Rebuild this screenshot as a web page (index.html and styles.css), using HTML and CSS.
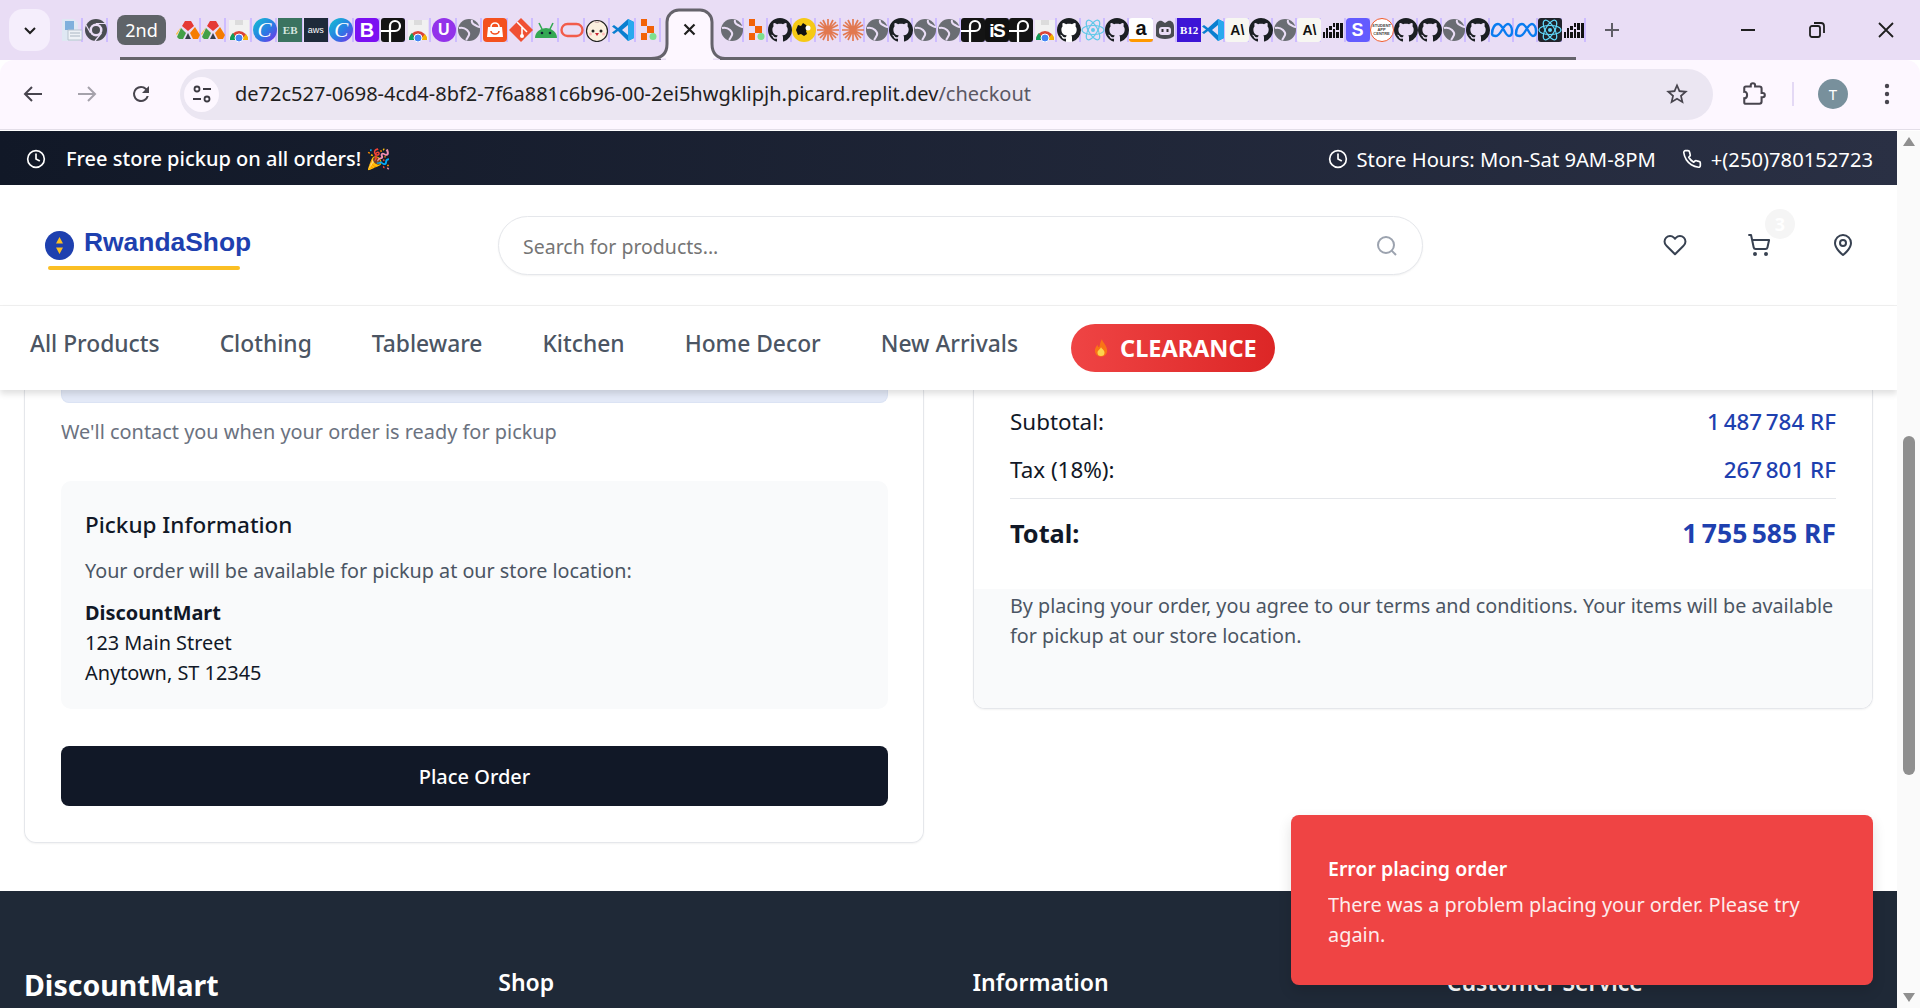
FILE: index.html
```html
<!DOCTYPE html>
<html lang="en">
<head>
  <meta charset="UTF-8">
  <title>Checkout - RwandaShop</title>
  <link rel="stylesheet" href="styles.css">
</head>
<body>

<!-- favicons used in the tab strip -->
<svg class="sprites" aria-hidden="true">
  <symbol id="doc" viewBox="0 0 24 24"><path d="M3 1h12l4 4v18H3z" fill="#dfe8f3"/><path d="M6 3h9v9H6z" fill="#7fb0dc"/><path d="M9 12h14v10H9z" fill="#eef2f6" stroke="#b9c4cf"/><path d="M11 15h10M11 18h10" stroke="#aab6c2"/></symbol>
  <symbol id="chromegrey" viewBox="0 0 24 24"><circle cx="12" cy="12" r="11" fill="#4a4d52"/><circle cx="12" cy="12" r="6.5" fill="#e9ddf5"/><circle cx="12" cy="12" r="4" fill="#4a4d52"/><path d="M12 5.500H22M6.500 15L2 7M17.500 15L11 23" stroke="#e9ddf5" stroke-width="1.200"/></symbol>
  <symbol id="tri" viewBox="0 0 24 24"><path d="M9 3h6l3 5-6 5-6-5z" fill="#e53935"/><path d="M5 10l5 5-3 6H3l-2-2z" fill="#43a047"/><path d="M5 9L1 17l-1-1z" fill="#fbc02d"/><path d="M19 9l5 8-2 4h-5l-3-6z" fill="#f57c00"/><path d="M12 15l3 6H9z" fill="#37404a"/></symbol>
  <symbol id="store" viewBox="0 0 24 24"><path d="M2 2h20v20H2z" fill="#f1f1f1"/><path d="M8 2h8v5H8z" fill="#dcdcdc"/><path d="M3 22a9 9 0 0 1 18 0z" fill="#db4437"/><path d="M3 22a9 9 0 0 1 3-7l4 7z" fill="#0f9d58"/><path d="M21 22a9 9 0 0 0-2-6l-5 6z" fill="#f4b400"/><circle cx="12" cy="20" r="4" fill="#4285f4" stroke="#fff"/></symbol>
  <symbol id="github" viewBox="0 0 16 16"><path fill="#1b1f23" d="M8 0C3.58 0 0 3.58 0 8c0 3.54 2.29 6.53 5.47 7.63.4.07.55-.17.55-.38 0-.19-.01-.82-.01-1.49-2.01.37-2.53-.49-2.69-.94-.09-.23-.48-.94-.82-1.13-.28-.15-.68-.52-.01-.53.63-.01 1.08.58 1.23.82.72 1.21 1.87.87 2.33.66.07-.52.28-.87.51-1.07-1.78-.2-3.64-.89-3.64-3.95 0-.87.31-1.59.82-2.15-.08-.2-.36-1.02.08-2.12 0 0 .67-.21 2.2.82.64-.18 1.32-.27 2-.27.68 0 1.36.09 2 .27 1.53-1.04 2.2-.82 2.2-.82.44 1.1.16 1.92.08 2.12.51.56.82 1.27.82 2.15 0 3.07-1.87 3.75-3.65 3.95.29.25.54.73.54 1.48 0 1.07-.01 1.93-.01 2.2 0 .21.15.46.55.38A8.013 8.013 0 0016 8c0-4.42-3.58-8-8-8z"/></symbol>
  <symbol id="globe" viewBox="0 0 24 24"><circle cx="12" cy="12" r="11" fill="#6a6d73"/><path d="M2 10c4-1 6 0 8 2s3 3 2 5-2 4-3 5" fill="none" stroke="#e9ddf5" stroke-width="2"/><path d="M15 2c-1 3 1 4 3 5s3 2 5 2" fill="none" stroke="#e9ddf5" stroke-width="2"/></symbol>
  <symbol id="loop" viewBox="0 0 24 24"><rect width="24" height="24" rx="3" fill="#141414"/><path d="M0 13h14a5 5 0 1 0-5-5v16" fill="none" stroke="#fff" stroke-width="2.200"/></symbol>
  <symbol id="bag" viewBox="0 0 24 24"><rect width="24" height="24" rx="4" fill="#f4511e"/><path d="M5 9h14l1 10H4z" fill="#fff"/><path d="M8 13a4 3 0 0 0 8 0" fill="none" stroke="#f4511e" stroke-width="1.600"/><path d="M8 9a4 4 0 0 1 8 0" fill="none" stroke="#fff" stroke-width="1.600"/></symbol>
  <symbol id="git" viewBox="0 0 24 24"><path d="M12 0l12 12-12 12L0 12z" fill="#f05033"/><path d="M8 4l5 5v9M13 9l5 5" fill="none" stroke="#fff" stroke-width="1.600"/><circle cx="13" cy="18" r="2" fill="#fff"/></symbol>
  <symbol id="android" viewBox="0 0 24 24"><path d="M1 20a11 10 0 0 1 22 0z" fill="#34a853"/><path d="M5 5l3 6M19 5l-3 6" stroke="#34a853" stroke-width="1.600"/><circle cx="8" cy="15" r="1.300" fill="#123"/><circle cx="16" cy="15" r="1.300" fill="#123"/></symbol>
  <symbol id="oracle" viewBox="0 0 24 24"><rect x="1.500" y="6" width="21" height="12" rx="6" fill="none" stroke="#f25c4a" stroke-width="2.400"/></symbol>
  <symbol id="bun" viewBox="0 0 24 24"><circle cx="12" cy="13" r="10.500" fill="#fbf0df" stroke="#222" stroke-width="1.200"/><path d="M9 3c1 2 5 2 6 0" fill="none" stroke="#caa"/><circle cx="8" cy="13" r="1.500" fill="#222"/><circle cx="16" cy="13" r="1.500" fill="#222"/><path d="M10 15h4l-2 3z" fill="#c23"/><circle cx="5.500" cy="16" r="1.500" fill="#fbb"/><circle cx="18.500" cy="16" r="1.500" fill="#fbb"/></symbol>
  <symbol id="vscode" viewBox="0 0 24 24"><path d="M17 1l6 3v16l-6 3L7 13l-4 3-2-1.500 4-3-4-3 2-1.500 4 3z" fill="#0a7fd0"/><path d="M17 1l6 3v16l-6 3z" fill="#29a9ee"/><path d="M17 7l-6 5 6 5z" fill="#e9ddf5"/></symbol>
  <symbol id="replit" viewBox="0 0 24 24"><path d="M5 1h6v7H5zM11 8h7v7h-7zM5 15h6v7H5z" fill="#f26207"/><circle cx="17" cy="18.500" r="3.500" fill="#7ee08f"/></symbol>
  <symbol id="pac" viewBox="0 0 24 24"><circle cx="12" cy="12" r="12" fill="#f6c915"/><path d="M4 12l2-5 3 1 2-3 3 2 2 3-2 3 1 3-3 2-3-2-3 1z" fill="#111"/><circle cx="16" cy="10" r="2.500" fill="#fff"/></symbol>
  <symbol id="star" viewBox="0 0 24 24"><path d="M12 1v22M1 12h22M4 4l16 16M20 4L4 20M7 2l10 20M17 2L7 22M2 7l20 10M22 7L2 17" stroke="#e2784f" stroke-width="1.700"/></symbol>
  <symbol id="react" viewBox="0 0 24 24"><g fill="none" stroke="#61c8e8" stroke-width="1.200"><ellipse cx="12" cy="12" rx="11" ry="4.500"/><ellipse cx="12" cy="12" rx="11" ry="4.500" transform="rotate(60 12 12)"/><ellipse cx="12" cy="12" rx="11" ry="4.500" transform="rotate(120 12 12)"/></g><circle cx="12" cy="12" r="2" fill="#61c8e8"/></symbol>
  <symbol id="reactdark" viewBox="0 0 24 24"><rect width="24" height="24" rx="3" fill="#20232a"/><g fill="none" stroke="#61dafb" stroke-width="1.200"><ellipse cx="12" cy="12" rx="11" ry="4.500"/><ellipse cx="12" cy="12" rx="11" ry="4.500" transform="rotate(60 12 12)"/><ellipse cx="12" cy="12" rx="11" ry="4.500" transform="rotate(120 12 12)"/></g><circle cx="12" cy="12" r="2" fill="#61dafb"/></symbol>
  <symbol id="copilot" viewBox="0 0 24 24"><path d="M3 9c0-5 3-7 6-6l3 2 3-2c3-1 6 1 6 6v9c-3 4-15 4-18 0z" fill="#4a4d52"/><rect x="6" y="9" width="12" height="8" rx="3" fill="#e9ddf5"/><path d="M9.500 11v3M14.500 11v3" stroke="#333" stroke-width="2"/></symbol>
  <symbol id="checker" viewBox="0 0 24 24"><path d="M2 14h2v6H2zM5 10h2v10H5zM8 8h3v4H8zM8 14h3v6H8zM12 11h2v9h-2zM15 5h3v7h-3zM15 14h3v6h-3zM19 5h3v15h-3zM12 5h2v4h-2z" fill="#111"/></symbol>
  <symbol id="meta" viewBox="0 0 24 24"><path d="M2 16c0-6 3-10 6-10 5 0 7 12 11 12 2 0 3-2 3-5 0-4-2-7-4-7-5 0-7 12-12 12-3 0-4-1-4-2z" fill="none" stroke="#0a7cf0" stroke-width="2.400"/></symbol>
</svg>

<header class="browser-tabs">
  <div class="tab-search"><svg width="16" height="16" viewBox="0 0 16 16"><path d="M3 6l5 5 5-5" fill="none" stroke="#1f1f1f" stroke-width="2"/></svg></div>

  <div class="tabs tabs-pinned">
    <div class="tab"><svg><use href="#doc"/></svg></div>
    <div class="tab"><svg><use href="#chromegrey"/></svg></div>
  </div>

  <div class="tab-group tab-group-first">
    <span class="group-chip">2nd</span>
    <div class="tabs tabs-wide">
      <div class="tab"><svg><use href="#tri"/></svg></div>
      <div class="tab"><svg><use href="#tri"/></svg></div>
      <div class="tab"><svg><use href="#store"/></svg></div>
      <div class="tab"><span class="fav fav-canva">C</span></div>
      <div class="tab"><span class="fav fav-eb">EB</span></div>
      <div class="tab"><span class="fav fav-aws">aws</span></div>
      <div class="tab"><span class="fav fav-canva">C</span></div>
      <div class="tab"><span class="fav fav-boot">B</span></div>
      <div class="tab"><svg><use href="#loop"/></svg></div>
      <div class="tab"><svg><use href="#store"/></svg></div>
      <div class="tab"><span class="fav fav-u">U</span></div>
      <div class="tab"><svg><use href="#globe"/></svg></div>
      <div class="tab"><svg><use href="#bag"/></svg></div>
      <div class="tab"><svg><use href="#git"/></svg></div>
      <div class="tab"><svg><use href="#android"/></svg></div>
      <div class="tab"><svg><use href="#oracle"/></svg></div>
      <div class="tab"><svg><use href="#bun"/></svg></div>
      <div class="tab"><svg><use href="#vscode"/></svg></div>
      <div class="tab"><svg><use href="#replit"/></svg></div>
    </div>
  </div>

  <svg class="active-tab" width="74" height="60" viewBox="0 0 74 60">
    <path d="M0 58.500C10 58.500 16 54 16 44V22A12 12 0 0 1 28 10H49A12 12 0 0 1 61 22V44C61 54 67 58.500 74 58.500" fill="#fdf7ff" stroke="#65636b" stroke-width="3"/>
    <rect x="15" y="55" width="47" height="5" fill="#fdf7ff"/>
    <path d="M33.500 24.500l10 10M43.500 24.500l-10 10" stroke="#1f1f1f" stroke-width="2.200"/>
  </svg>

  <div class="tab-group tab-group-second">
    <div class="tabs">
      <div class="tab"><svg><use href="#globe"/></svg></div>
      <div class="tab"><svg><use href="#replit"/></svg></div>
      <div class="tab"><svg><use href="#github"/></svg></div>
      <div class="tab"><svg><use href="#pac"/></svg></div>
      <div class="tab"><svg><use href="#star"/></svg></div>
      <div class="tab"><svg><use href="#star"/></svg></div>
      <div class="tab"><svg><use href="#globe"/></svg></div>
      <div class="tab"><svg><use href="#github"/></svg></div>
      <div class="tab"><svg><use href="#globe"/></svg></div>
      <div class="tab"><svg><use href="#globe"/></svg></div>
      <div class="tab"><svg><use href="#loop"/></svg></div>
      <div class="tab"><span class="fav fav-is">iS</span></div>
      <div class="tab"><svg><use href="#loop"/></svg></div>
      <div class="tab"><svg><use href="#store"/></svg></div>
      <div class="tab"><span class="fav-white"><svg><use href="#github"/></svg></span></div>
      <div class="tab"><svg><use href="#react"/></svg></div>
      <div class="tab"><svg><use href="#github"/></svg></div>
      <div class="tab"><span class="fav fav-amazon">a</span></div>
      <div class="tab"><svg><use href="#copilot"/></svg></div>
      <div class="tab"><span class="fav fav-b12">B12</span></div>
      <div class="tab"><svg><use href="#vscode"/></svg></div>
      <div class="tab"><span class="fav fav-anthropic">A\</span></div>
      <div class="tab"><svg><use href="#github"/></svg></div>
      <div class="tab"><svg><use href="#globe"/></svg></div>
      <div class="tab"><span class="fav fav-anthropic">A\</span></div>
      <div class="tab"><svg><use href="#checker"/></svg></div>
      <div class="tab"><span class="fav fav-stripe">S</span></div>
      <div class="tab"><span class="fav fav-student">STUDENT APP CENTRE</span></div>
      <div class="tab"><svg><use href="#github"/></svg></div>
      <div class="tab"><svg><use href="#github"/></svg></div>
      <div class="tab"><svg><use href="#globe"/></svg></div>
      <div class="tab"><svg><use href="#github"/></svg></div>
      <div class="tab"><svg><use href="#meta"/></svg></div>
      <div class="tab"><svg><use href="#meta"/></svg></div>
      <div class="tab"><svg><use href="#reactdark"/></svg></div>
      <div class="tab"><svg><use href="#checker"/></svg></div>
    </div>
  </div>

  <svg class="new-tab" width="18" height="18" viewBox="0 0 18 18"><path d="M9 2v14M2 9h14" stroke="#5f5d66" stroke-width="2"/></svg>

  <div class="window-controls">
    <div class="window-btn"><svg width="18" height="18" viewBox="0 0 18 18"><path d="M2 9h14" stroke="#1f1f1f" stroke-width="2"/></svg></div>
    <div class="window-btn"><svg width="18" height="18" viewBox="0 0 18 18"><rect x="2" y="5" width="10" height="11" rx="2" fill="none" stroke="#1f1f1f" stroke-width="1.800"/><path d="M6 2h7a3 3 0 0 1 3 3v7" fill="none" stroke="#1f1f1f" stroke-width="1.800"/></svg></div>
    <div class="window-btn"><svg width="18" height="18" viewBox="0 0 18 18"><path d="M2 2l14 14M16 2L2 16" stroke="#1f1f1f" stroke-width="1.800"/></svg></div>
  </div>
</header>

<div class="browser-toolbar">
  <div class="tool tool-first"><svg width="22" height="22" viewBox="0 0 22 22"><path d="M20 11H3M10 4l-7 7 7 7" fill="none" stroke="#48454e" stroke-width="2"/></svg></div>
  <div class="tool"><svg width="22" height="22" viewBox="0 0 22 22"><path d="M2 11h17M12 4l7 7-7 7" fill="none" stroke="#a5a2ab" stroke-width="2"/></svg></div>
  <div class="tool"><svg width="24" height="24" viewBox="0 0 24 24"><path fill="#48454e" d="M17.650 6.350A7.960 7.960 0 0 0 12 4a8 8 0 1 0 7.730 10h-2.080A6 6 0 1 1 12 6c1.660 0 3.140.690 4.220 1.780L13 11h7V4l-2.350 2.350z"/></svg></div>

  <div class="omnibox">
    <span class="site-info"><svg width="22" height="22" viewBox="0 0 22 22"><g fill="none" stroke="#3c3a42" stroke-width="1.800"><circle cx="6" cy="6" r="2.500"/><path d="M12 6h8M2 16h8"/><circle cx="16" cy="16" r="2.500"/></g></svg></span>
    <span class="url">de72c527-0698-4cd4-8bf2-7f6a881c6b96-00-2ei5hwgklipjh.picard.replit.dev<span class="url-path">/checkout</span></span>
    <svg class="url-star" width="26" height="26" viewBox="0 0 24 24"><path fill="#48454e" d="M22 9.240l-7.190-.620L12 2 9.190 8.630 2 9.240l5.460 4.730L5.820 21 12 17.270 18.180 21l-1.630-7.030L22 9.240zM12 15.400l-3.760 2.270 1-4.280-3.320-2.880 4.380-.380L12 6.100l1.710 4.040 4.380.380-3.320 2.880 1 4.280L12 15.400z"/></svg>
  </div>

  <div class="tool tool-ext"><svg width="26" height="26" viewBox="0 0 24 24"><path fill="none" stroke="#48454e" stroke-width="1.900" d="M20 11h-1V7a2 2 0 0 0-2-2h-4V4a2 2 0 0 0-4 0v1H4.500a1.500 1.500 0 0 0-1.500 1.500V10c3.500-.500 3.500 6 0 6v3.500A1.500 1.500 0 0 0 4.500 21H17a2 2 0 0 0 2-2v-4h1a2 2 0 0 0 0-4z"/></svg></div>
  <span class="toolbar-sep"></span>
  <span class="avatar">T</span>
  <div class="tool tool-menu"><svg width="6" height="24" viewBox="0 0 6 24"><circle cx="3" cy="4" r="2.200" fill="#48454e"/><circle cx="3" cy="12" r="2.200" fill="#48454e"/><circle cx="3" cy="20" r="2.200" fill="#48454e"/></svg></div>
</div>

<div class="viewport">
  <div class="page">
    <div class="topbar">
      <div class="topbar-item topbar-promo">
        <svg class="line-icon" width="20" height="20" viewBox="0 0 24 24"><circle cx="12" cy="12" r="10"/><path d="M12 6v6l4 2"/></svg>
        <span>Free store pickup on all orders! 🎉</span>
      </div>
      <div class="topbar-right">
        <div class="topbar-item">
          <svg class="line-icon" width="20" height="20" viewBox="0 0 24 24"><circle cx="12" cy="12" r="10"/><path d="M12 6v6l4 2"/></svg>
          <span>Store Hours: Mon-Sat 9AM-8PM</span>
        </div>
        <div class="topbar-item">
          <svg class="line-icon" width="20" height="20" viewBox="0 0 24 24"><path d="M22 16.920v3a2 2 0 0 1-2.180 2 19.790 19.790 0 0 1-8.630-3.070 19.500 19.500 0 0 1-6-6 19.790 19.790 0 0 1-3.070-8.670A2 2 0 0 1 4.110 2h3a2 2 0 0 1 2 1.720 12.840 12.840 0 0 0 .7 2.810 2 2 0 0 1-.45 2.110L8.090 9.910a16 16 0 0 0 6 6l1.270-1.270a2 2 0 0 1 2.110-.45 12.840 12.840 0 0 0 2.810.7A2 2 0 0 1 22 16.920z"/></svg>
          <span>+(250)780152723</span>
        </div>
      </div>
    </div>

    <div class="site-header">
      <a class="logo">
        <svg width="29" height="29" viewBox="0 0 29 29"><circle cx="14.500" cy="14.500" r="14.500" fill="#1e40af"/><path d="M14.500 6l3.500 6.500h-7zM14.500 23l-3.500-6.500h7z" fill="#fbbf24"/></svg>
        <span class="logo-text">RwandaShop</span>
      </a>
      <div class="search">
        <input type="text" placeholder="Search for products...">
        <svg class="search-icon" width="24" height="24" viewBox="0 0 24 24"><circle cx="11" cy="11" r="8"/><path d="M21 21l-4.350-4.350"/></svg>
      </div>
      <div class="header-icons">
        <svg class="header-icon" width="24" height="24" viewBox="0 0 24 24"><path d="M20.840 4.610a5.500 5.500 0 0 0-7.780 0L12 5.670l-1.060-1.060a5.500 5.500 0 0 0-7.780 7.780l1.060 1.060L12 21.230l7.780-7.780 1.060-1.060a5.500 5.500 0 0 0 0-7.780z"/></svg>
        <div class="cart">
          <svg class="header-icon" width="24" height="24" viewBox="0 0 24 24"><circle cx="8" cy="21" r="1"/><circle cx="19" cy="21" r="1"/><path d="M2.050 2.050h2l2.660 12.420a2 2 0 0 0 2 1.580h9.780a2 2 0 0 0 1.950-1.570l1.650-7.430H5.120"/></svg>
          <span class="cart-badge">3</span>
        </div>
        <svg class="header-icon" width="24" height="24" viewBox="0 0 24 24"><path d="M20 10c0 6-8 12-8 12s-8-6-8-12a8 8 0 0 1 16 0Z"/><circle cx="12" cy="10" r="3"/></svg>
      </div>
    </div>

    <nav class="site-nav">
      <a>All Products</a>
      <a>Clothing</a>
      <a>Tableware</a>
      <a>Kitchen</a>
      <a>Home Decor</a>
      <a>New Arrivals</a>
      <a class="clearance"><svg width="14" height="20" viewBox="0 0 16 22"><path d="M9 1c1 4 6 7 6 13a7 7 0 0 1-14 0c0-3 2-5 3-7 0 2 1 3 2 3 1-3 1-6 3-9z" fill="#f97316"/><path d="M8 10c1 2 4 3 4 6a4 4 0 0 1-8 0c0-3 3-3 4-6z" fill="#fcd34d"/></svg>CLEARANCE</a>
    </nav>

    <main class="checkout">
      <section class="card">
        <div class="pickup-notice"></div>
        <p class="help-text">We'll contact you when your order is ready for pickup</p>
        <div class="pickup-info">
          <h3>Pickup Information</h3>
          <p>Your order will be available for pickup at our store location:</p>
          <address><strong>DiscountMart</strong><br>123 Main Street<br>Anytown, ST 12345</address>
        </div>
        <button class="place-order" type="button">Place Order</button>
      </section>

      <section class="card summary">
        <div class="summary-totals">
          <div class="summary-row"><span>Subtotal:</span><span class="price">1&#8239;487&#8239;784 RF</span></div>
          <div class="summary-row summary-tax"><span>Tax (18%):</span><span class="price">267&#8239;801 RF</span></div>
          <div class="summary-row summary-total"><span>Total:</span><span class="price">1&#8239;755&#8239;585 RF</span></div>
        </div>
        <p class="summary-terms">By placing your order, you agree to our terms and conditions. Your items will be available for pickup at our store location.</p>
      </section>
    </main>

    <footer class="site-footer">
      <h2>DiscountMart</h2>
      <h4>Shop</h4>
      <h4>Information</h4>
      <h4>Customer Service</h4>
    </footer>

    <div class="toast">
      <div class="toast-title">Error placing order</div>
      <div class="toast-body">There was a problem placing your order. Please try again.</div>
    </div>
  </div>

  <div class="scrollbar">
    <span class="scroll-up"></span>
    <span class="scroll-thumb"></span>
    <span class="scroll-down"></span>
  </div>
</div>

</body>
</html>
```

FILE: styles.css
```css
* {
  box-sizing: border-box;
}
html, body {
  margin: 0;
  height: 1008px;
  overflow: hidden;
}
body {
  font-family: "Noto Sans", "Open Sans", Arial, sans-serif;
  font-size: 19.9px;
  line-height: 30px;
  color: #111827;
  background-color: #fff;
  display: flex;
  flex-direction: column;
}
.sprites {
  display: none;
}

/* browser tab strip */
.browser-tabs {
  display: flex;
  align-items: center;
  height: 60px;
  flex: none;
  background-color: #e9ddf5;
}
.tab-search {
  display: flex;
  align-items: center;
  justify-content: center;
  width: 41px;
  height: 42px;
  margin-left: 9px;
  border-radius: 14px;
  background-color: #f5eefc;
}
.tabs {
  display: flex;
  align-items: center;
}
.tabs-pinned {
  margin-left: 8px;
}
.tab {
  display: flex;
  align-items: center;
  justify-content: center;
  flex: none;
  width: 24.06px;
  height: 24px;
  background: linear-gradient(#cdbcff, #cdbcff) right / 2px 100% no-repeat;
}
.tabs-pinned .tab {
  width: 25px;
}
.tabs-wide .tab {
  width: 25.6px;
}
.tab svg {
  width: 24px;
  height: 24px;
  display: block;
}
.fav {
  display: flex;
  align-items: center;
  justify-content: center;
  width: 24px;
  height: 24px;
  overflow: hidden;
  color: #fff;
  font-family: "Liberation Sans", Arial, sans-serif;
  font-size: 14px;
  line-height: 1;
  font-weight: bold;
}
.fav-white {
  background-color: #fff;
  border-radius: 12px;
}
.fav-canva {
  border-radius: 50%;
  background: linear-gradient(135deg, #13c4cf, #2a7be4 55%, #7d2ae8);
  font-family: "Liberation Serif", serif;
  font-style: italic;
  font-size: 21px;
  font-weight: normal;
}
.fav-eb {
  background-color: #3a7360;
  color: #d6e6df;
  font-family: "Liberation Serif", serif;
  font-size: 11px;
}
.fav-aws {
  background-color: #1e2a3a;
  font-size: 9px;
  font-weight: normal;
}
.fav-boot {
  border-radius: 4px;
  background-color: #7b10f2;
  font-size: 20px;
}
.fav-u {
  border-radius: 50%;
  background-color: #9333ea;
  font-size: 16px;
}
.fav-is {
  border-radius: 3px;
  background-color: #111;
  font-size: 19px;
  letter-spacing: -1.5px;
}
.fav-amazon {
  border-radius: 3px;
  background-color: #fff;
  color: #111;
  font-size: 20px;
  align-items: flex-start;
  border-bottom: 3px solid #f90;
}
.fav-b12 {
  background-color: #3d15d6;
  font-family: "Liberation Serif", serif;
  font-size: 11px;
}
.fav-anthropic {
  border-radius: 3px;
  background-color: #f7f7f2;
  color: #111;
  font-size: 14px;
}
.fav-stripe {
  border-radius: 4px;
  background-color: #635bff;
  font-size: 18px;
}
.fav-student {
  border-radius: 50%;
  border: 1.5px solid #f0592b;
  background-color: #fff;
  color: #444;
  font-size: 4px;
  text-align: center;
}
.tab-group {
  position: relative;
  display: flex;
  align-items: center;
  height: 60px;
}
.tab-group::after {
  content: "";
  position: absolute;
  bottom: 0;
  height: 3px;
  background-color: #65636b;
}
.tab-group-first {
  margin-left: 9px;
}
.tab-group-first::after {
  left: 3px;
  right: 0;
}
.tab-group-second {
  margin-left: -5px;
}
.tab-group-second::after {
  left: 0;
  right: 10px;
}
.group-chip {
  width: 49px;
  height: 30px;
  margin-right: 9px;
  border-radius: 8px;
  background-color: #5f6368;
  color: #fff;
  font-size: 18px;
  line-height: 30px;
  text-align: center;
}
.active-tab {
  position: relative;
  z-index: 1;
  flex: none;
  margin-left: -10px;
}
.new-tab {
  margin-left: 17px;
}
.window-controls {
  display: flex;
  margin-left: auto;
}
.window-btn {
  display: flex;
  align-items: center;
  justify-content: center;
  width: 69px;
  height: 60px;
}

/* browser toolbar */
.browser-toolbar {
  display: flex;
  align-items: center;
  flex: none;
  height: 70px;
  padding-bottom: 1px;
  padding-right: 6px;
  border-bottom: 1px solid #e3dee8;
  border-radius: 14px 14px 0 0;
  background-color: #fdf7ff;
}
.tool {
  display: flex;
  align-items: center;
  justify-content: center;
  flex: none;
  width: 54px;
  height: 44px;
}
.tool-first {
  margin-left: 6px;
}
.omnibox {
  display: flex;
  align-items: center;
  flex: 1;
  height: 51px;
  margin-left: 12px;
  padding-left: 3px;
  padding-right: 23px;
  border-radius: 26px;
  background-color: #ebe6f2;
}
.site-info {
  display: flex;
  align-items: center;
  justify-content: center;
  width: 35px;
  height: 35px;
  margin-left: 1px;
  border-radius: 50%;
  background-color: #fdf7ff;
}
.url {
  margin-left: 16px;
  color: #1f1f1f;
  font-size: 20px;
}
.url-path {
  color: #5b5863;
}
.url-star {
  margin-left: auto;
}
.tool-ext {
  margin-left: 12px;
  padding-left: 3px;
}
.toolbar-sep {
  width: 2px;
  height: 24px;
  margin-left: 13px;
  background-color: #e4d9f5;
}
.avatar {
  flex: none;
  width: 30px;
  height: 30px;
  margin-left: 24px;
  border-radius: 50%;
  background-color: #78909c;
  color: #fff;
  font-size: 15px;
  line-height: 30px;
  text-align: center;
}
.tool-menu {
  margin-left: 12px;
}

/* page area */
.viewport {
  display: flex;
  flex: 1;
  min-height: 0;
  padding-top: 1px;
  background-color: #fff;
}
.page {
  position: relative;
  flex: 1;
  min-width: 0;
  overflow: hidden;
}
.scrollbar {
  position: relative;
  flex: none;
  width: 23px;
  background-color: #fafafa;
}
.scroll-up, .scroll-down, .scroll-thumb {
  position: absolute;
}
.scroll-up {
  top: 6px;
  left: 6px;
  border-left: 6px solid transparent;
  border-right: 6px solid transparent;
  border-bottom: 9px solid #8f8f8f;
}
.scroll-down {
  bottom: 6px;
  left: 6px;
  border-left: 6px solid transparent;
  border-right: 6px solid transparent;
  border-top: 9px solid #8f8f8f;
}
.scroll-thumb {
  top: 305px;
  left: 6px;
  width: 12px;
  height: 339px;
  border-radius: 6px;
  background-color: #8f8f8f;
}

/* store header */
.topbar {
  display: flex;
  align-items: center;
  justify-content: space-between;
  height: 54px;
  padding: 1px 24px 0 25px;
  background: linear-gradient(90deg, #111827, #2a3044);
  color: #fff;
  font-size: 20.2px;
}
.topbar-right {
  display: flex;
  gap: 26px;
}
.topbar-item {
  display: flex;
  align-items: center;
  gap: 9px;
}
.topbar-promo {
  gap: 20px;
  font-size: 20px;
  font-weight: 500;
  margin-left: 1px;
}
.line-icon {
  fill: none;
  stroke: #fff;
  stroke-width: 2;
  stroke-linecap: round;
  stroke-linejoin: round;
}
.site-header {
  display: flex;
  align-items: center;
  height: 121px;
  padding-left: 45px;
  padding-right: 42px;
  border-bottom: 1px solid #f0f0f0;
}
.logo {
  position: relative;
  display: flex;
  align-items: center;
  gap: 10px;
  width: 453px;
  flex: none;
}
.logo::after {
  content: "";
  position: absolute;
  left: 3px;
  top: 35px;
  width: 192px;
  height: 4px;
  border-radius: 2px;
  background-color: #fbbf24;
}
.logo-text {
  margin-top: -7px;
  color: #1e40af;
  font-family: "Liberation Sans", Arial, sans-serif;
  font-size: 26.4px;
  font-weight: bold;
}
.search {
  position: relative;
  width: 925px;
  flex: none;
}
.search input {
  display: block;
  width: 100%;
  height: 59px;
  padding: 3px 70px 0 24px;
  border: 1px solid #e5e7eb;
  border-radius: 30px;
  box-shadow: 0 1px 2px rgba(0, 0, 0, 0.05);
  font-family: inherit;
  font-size: 19.5px;
  outline: none;
}
.search input::placeholder {
  color: #757575;
}
.search-icon {
  position: absolute;
  top: 18px;
  right: 24px;
  fill: none;
  stroke: #9ca3af;
  stroke-width: 2;
}
.header-icons {
  display: flex;
  gap: 60px;
  margin-left: auto;
}
.header-icon {
  display: block;
  fill: none;
  stroke: #374151;
  stroke-width: 2;
  stroke-linecap: round;
  stroke-linejoin: round;
}
.cart {
  position: relative;
}
.cart-badge {
  position: absolute;
  top: -24px;
  right: -24px;
  width: 30px;
  height: 30px;
  border-radius: 50%;
  background-color: #f5f5f5;
  color: #fff;
  font-size: 18px;
  font-weight: bold;
  line-height: 30px;
  text-align: center;
}
.site-nav {
  position: relative;
  z-index: 2;
  display: flex;
  align-items: center;
  gap: 60px;
  height: 84px;
  padding-left: 30px;
  background-color: #fff;
  box-shadow: 0 4px 6px rgba(0, 0, 0, 0.12);
}
.site-nav a {
  padding-bottom: 8px;
  color: #4b5563;
  font-size: 22.8px;
  font-weight: 500;
}
.site-nav a.clearance {
  display: flex;
  align-items: center;
  gap: 12px;
  height: 48px;
  margin-left: -7px;
  padding: 0 18px 0 23px;
  border-radius: 24px;
  background: linear-gradient(90deg, #ef4444, #dc2626);
  color: #fff;
  font-size: 23.5px;
  font-weight: bold;
}

/* checkout */
.checkout {
  display: grid;
  grid-template-columns: 900px 900px;
  gap: 49px;
  align-items: start;
  padding-left: 24px;
}
.card {
  border: 1px solid #e5e7eb;
  border-top: none;
  border-radius: 0 0 12px 12px;
  box-shadow: 0 1px 2px rgba(0, 0, 0, 0.05);
  padding: 0 35px 36px 36px;
}
.pickup-notice {
  height: 13px;
  border: 1px solid #dbe3f4;
  border-top: none;
  border-radius: 0 0 8px 8px;
  background-color: #e3e9f7;
}
.help-text {
  margin: 14px 0 34px;
  color: #6b7280;
}
.pickup-info {
  padding: 25px 24px 21px;
  border-radius: 10px;
  background-color: #f9fafb;
}
.pickup-info h3 {
  margin: 0 0 12px;
  font-size: 22.5px;
  font-weight: 500;
  line-height: 38px;
}
.pickup-info p {
  margin: 0 0 12px;
  color: #4b5563;
  font-size: 19.75px;
}
.pickup-info address {
  font-style: normal;
  color: #111827;
}
.place-order {
  display: block;
  width: 100%;
  height: 60px;
  margin-top: 37px;
  padding-top: 2px;
  border: none;
  border-radius: 8px;
  background-color: #111827;
  color: #fff;
  font-family: inherit;
  font-size: 20px;
  font-weight: 500;
}
.summary {
  padding: 0;
}
.summary-totals {
  padding: 17px 36px 38px;
  font-size: 22.4px;
}
.summary-row {
  display: flex;
  justify-content: space-between;
  margin-bottom: 18px;
}
.summary-tax {
  margin-bottom: 13px;
}
.summary-total {
  margin: 0;
  padding-top: 17px;
  border-top: 1px solid #e5e7eb;
  font-size: 25.3px;
  font-weight: bold;
  line-height: 35px;
}
.price {
  color: #1e40af;
  font-weight: 500;
}
.summary-total .price {
  font-size: 26.5px;
  font-weight: bold;
}
.summary-terms {
  margin: 0;
  padding: 2px 30px 57px 36px;
  border-radius: 0 0 12px 12px;
  background-color: #f9fafb;
  color: #4b5563;
  font-size: 19.75px;
}

/* footer */
.site-footer {
  display: grid;
  grid-template-columns: repeat(4, 1fr);
  gap: 48px;
  margin-top: 48px;
  padding: 74px 24px 40px;
  background-color: #1f2937;
  color: #fff;
}
.site-footer h2 {
  margin: 1px 0 0;
  font-size: 28.5px;
  font-weight: bold;
  line-height: 38px;
}
.site-footer h4 {
  margin: 0;
  font-size: 23px;
  font-weight: 600;
  line-height: 34px;
}

/* toast */
.toast {
  position: absolute;
  right: 24px;
  bottom: 23px;
  z-index: 5;
  width: 582px;
  padding: 39px 37px 35px;
  border-radius: 8px;
  background-color: #ef4444;
  box-shadow: 0 6px 14px rgba(0, 0, 0, 0.12);
  color: #fff;
}
.toast-title {
  margin-bottom: 6px;
  font-size: 19.5px;
  font-weight: 600;
}
.toast-body {
  opacity: 0.9;
}
```
